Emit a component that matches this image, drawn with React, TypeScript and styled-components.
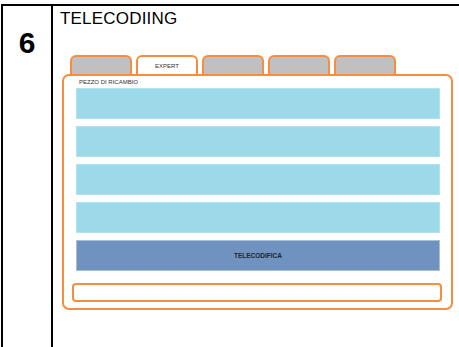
import styled, { createGlobalStyle } from 'styled-components';

const GlobalStyle = createGlobalStyle`
  body {
    margin: 0;
    background: #fff;
    font-family: 'Liberation Sans', Arial, sans-serif;
  }
`

const tabs = [
  { label: '', active: false },
  { label: 'EXPERT', active: true },
  { label: '', active: false },
  { label: '', active: false },
  { label: '', active: false },
]

const fields = [1, 2, 3, 4]

export default function App() {
  return (
    <>
      <GlobalStyle />
      <Table>
        <NumberCell>6</NumberCell>
        <ContentCell>
          <Title>TELECODIING</Title>
          <TabStrip>
            {tabs.map((tab, i) => (
              <Tab key={i} $active={tab.active}>
                {tab.label}
              </Tab>
            ))}
          </TabStrip>
          <Panel>
            <PanelLabel>PEZZO DI RICAMBIO</PanelLabel>
            <FieldList>
              {fields.map((f) => (
                <Field key={f} />
              ))}
              <ActionButton>TELECODIFICA</ActionButton>
            </FieldList>
            <StatusBox />
          </Panel>
        </ContentCell>
      </Table>
    </>
  )
}

const Table = styled.div`
  display: flex;
  box-sizing: border-box;
  height: 343px;
  margin: 4px 0 0 1px;
  border-top: 2px solid #000;
  border-left: 2px solid #000;
`
const NumberCell = styled.div`
  width: 48px;
  flex-shrink: 0;
  border-right: 2px solid #000;
  padding-top: 22px;
  text-align: center;
  font-size: 30px;
  font-weight: bold;
  line-height: 1;
  color: #000;
`
const ContentCell = styled.div`
  flex: 1;
  padding: 5px 0 0 7px;
`
const Title = styled.div`
  font-size: 17px;
  line-height: 16px;
  letter-spacing: 0.2px;
  color: #000;
`
const TabStrip = styled.div`
  display: flex;
  gap: 4px;
  margin: 28px 0 0 10px;
`
const Tab = styled.div<{ $active: boolean }>`
  box-sizing: border-box;
  width: 62px;
  height: 19px;
  border: 2px solid #f68d40;
  border-bottom: none;
  border-radius: 6px 6px 0 0;
  background: ${(p) => (p.$active ? '#fff' : '#c0c0c0')};
  display: flex;
  align-items: center;
  justify-content: center;
  padding-top: 1px;
  font-size: 6px;
  color: #333;
`
const Panel = styled.div`
  box-sizing: border-box;
  width: 391px;
  margin-left: 2px;
  border: 2px solid #f68d40;
  border-radius: 7px;
  padding: 2px 11px 6px 12px;
`
const PanelLabel = styled.div`
  margin: 0 0 2px 3px;
  font-size: 6px;
  line-height: 8px;
  color: #333;
`
const FieldList = styled.div`
  display: flex;
  flex-direction: column;
  gap: 7px;
`
const Field = styled.div`
  height: 31px;
  background: #9cd9e9;
  border: 1px solid #b3e2ef;
  box-sizing: border-box;
`
const ActionButton = styled.div`
  box-sizing: border-box;
  height: 31px;
  background: #7092be;
  border: 1px solid #a9bedb;
  display: flex;
  align-items: center;
  justify-content: center;
  font-size: 6.5px;
  font-weight: bold;
  color: #1c2533;
`
const StatusBox = styled.div`
  box-sizing: border-box;
  height: 19px;
  margin: 12px -2px 0 -4px;
  border: 2px solid #f68d40;
  border-radius: 4px;
`
